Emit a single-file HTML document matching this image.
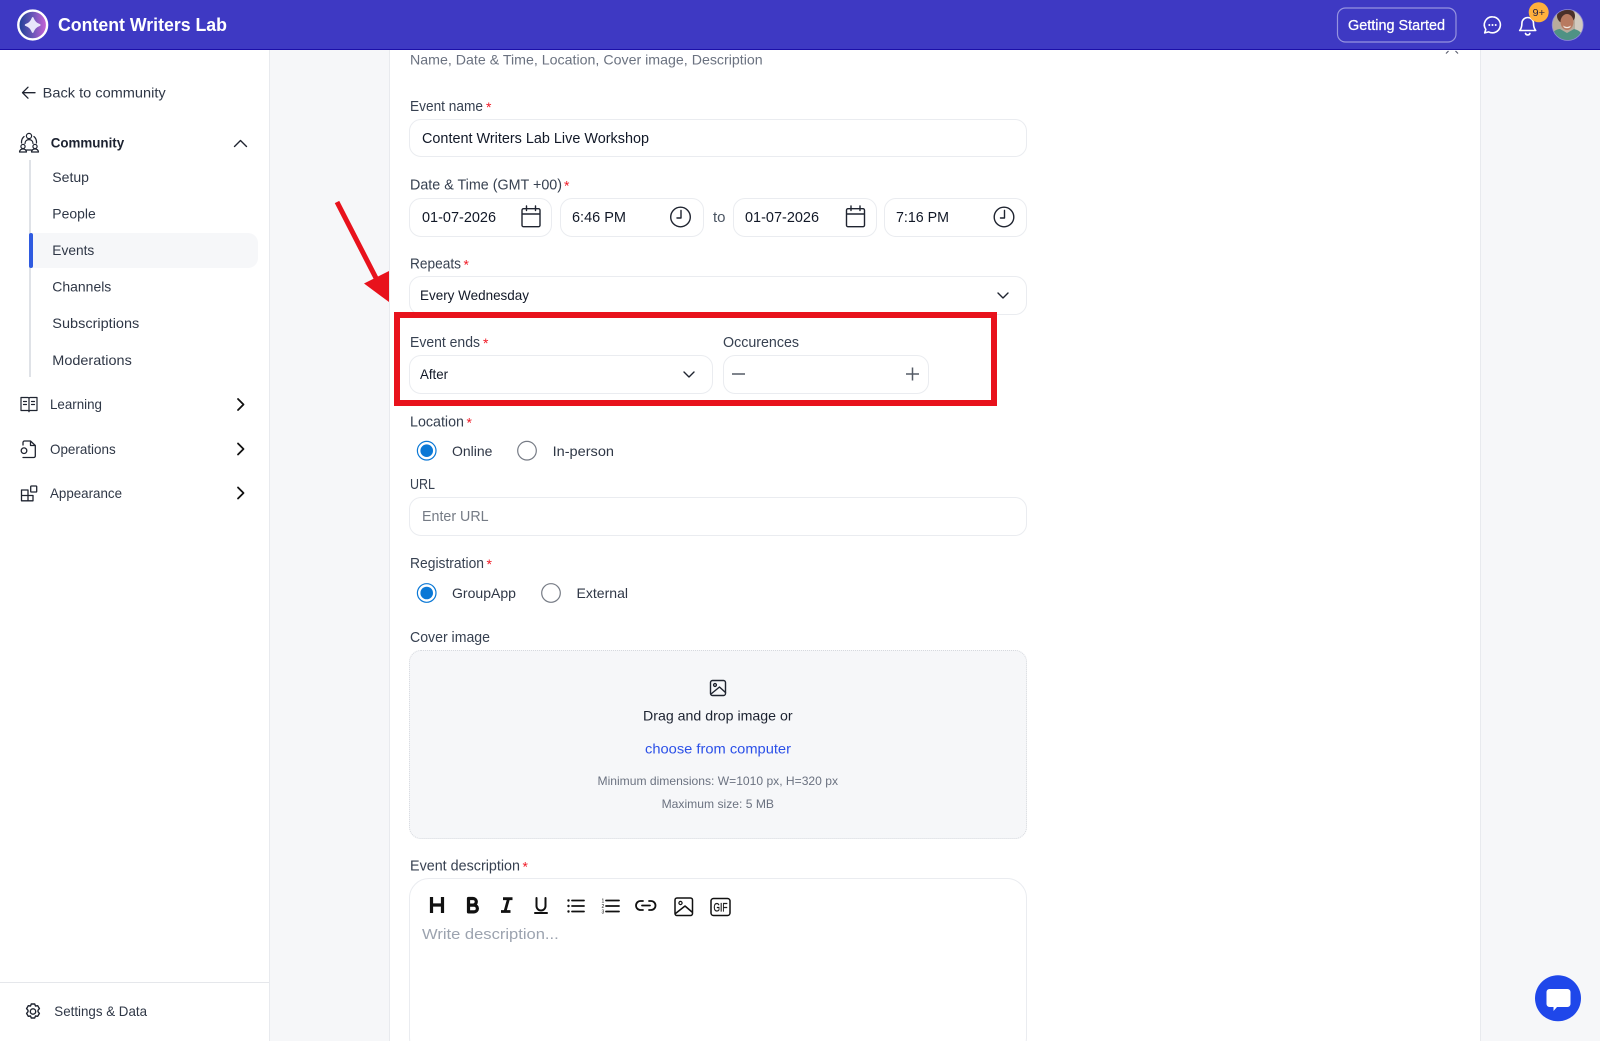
<!DOCTYPE html>
<html lang="en">
<head>
<meta charset="utf-8">
<title>Content Writers Lab</title>
<style>
html,body{margin:0;padding:0;width:1600px;height:1041px;overflow:hidden;background:#fff}
body{position:relative;font-family:"Liberation Sans",sans-serif}
.b{position:absolute;box-sizing:border-box}
.in{border:1px solid #eaecf0;border-radius:12px;background:#fff}
svg.o{position:absolute;left:0;top:0}
text{font-family:"Liberation Sans",sans-serif;font-size:14.5px;fill:#374151}
.v{fill:#111827}
.r{fill:#f01824;font-size:14px}
.s{fill:#2f3746;font-size:14px}
.i{fill:none;stroke:#1f2430;stroke-width:1.4;stroke-linecap:round;stroke-linejoin:round}
.c{fill:none;stroke:#111;stroke-width:1.8;stroke-linecap:round;stroke-linejoin:round}
.t{fill:none;stroke:#111;stroke-width:2;stroke-linecap:round;stroke-linejoin:round}
</style>
</head>
<body>
<div class="b" style="left:0;top:50px;width:270px;height:991px;background:#fff;border-right:1px solid #e8eaee"></div>
<div class="b" style="left:270px;top:50px;width:1330px;height:991px;background:#f6f7f9"></div>
<div class="b" style="left:389px;top:50px;width:1092px;height:991px;background:#fff;border-left:1px solid #e8eaee;border-right:1px solid #e8eaee"></div>
<div class="b" style="left:0;top:982px;width:269px;height:1px;background:#e5e7eb"></div>
<div class="b" style="left:29px;top:160px;width:2px;height:217px;background:#dfe2e7"></div>
<div class="b" style="left:30px;top:233px;width:228px;height:35px;background:#f6f7f9;border-radius:0 10px 10px 0"></div>
<div class="b" style="left:28.5px;top:233px;width:4.5px;height:35px;background:#2f5be0;border-radius:2px"></div>

<div class="b in" style="left:409px;top:119px;width:618px;height:38px"></div>
<div class="b in" style="left:409px;top:198px;width:143px;height:38.500px"></div>
<div class="b in" style="left:560px;top:198px;width:144px;height:38.500px"></div>
<div class="b in" style="left:733px;top:198px;width:144px;height:38.500px"></div>
<div class="b in" style="left:884px;top:198px;width:143px;height:38.500px"></div>
<div class="b in" style="left:409px;top:276px;width:618px;height:38.500px"></div>
<div class="b in" style="left:409px;top:355px;width:304px;height:38.500px"></div>
<div class="b in" style="left:723px;top:355px;width:206px;height:38.500px"></div>
<div class="b in" style="left:409px;top:497px;width:618px;height:39px"></div>
<div class="b" style="left:409px;top:650px;width:618px;height:189px;background:#f6f7f9;border:1px dotted #d6d9de;border-radius:12px"></div>
<div class="b" style="left:409px;top:878px;width:618px;height:180px;background:#fff;border:1px solid #eaecf0;border-radius:20px"></div>

<div class="b" style="left:394px;top:312px;width:603px;height:94px;border:6px solid #e8121c"></div>

<div class="b" style="left:0;top:0;width:1600px;height:50px;background:#3e39c3;border-bottom:1px solid #1c0fa8"></div>

<svg class="o" width="1600" height="1041" viewBox="0 0 1600 1041" xmlns="http://www.w3.org/2000/svg">
<defs>
<linearGradient id="lg" x1="0" y1="0" x2="1" y2="0"><stop offset="0" stop-color="#1b3e95"/><stop offset=".5" stop-color="#6a55b8"/><stop offset="1" stop-color="#cc63d8"/></linearGradient>
<clipPath id="av"><circle cx="1567.7" cy="25" r="15.5"/></clipPath>
</defs>

<!-- header -->
<circle cx="32.7" cy="25" r="14.4" fill="url(#lg)" stroke="#fff" stroke-width="2.4"/>
<path d="M32.700 18Q34.500 23.200 39.700 25Q34.500 26.800 32.700 32Q30.900 26.800 25.700 25Q30.900 23.200 32.700 18Z" fill="#e8e6fa" stroke="#e8e6fa" stroke-width="1.800" stroke-linejoin="round"/>
<text x="58" y="31" textLength="169" lengthAdjust="spacingAndGlyphs" style="font-size:18px;font-weight:700;fill:#fff">Content Writers Lab</text>
<rect x="1337.5" y="8" width="118.5" height="34" rx="8" fill="none" stroke="#9693e0" stroke-width="1.2"/>
<text x="1348" y="30" textLength="97" lengthAdjust="spacingAndGlyphs" style="font-size:14.5px;fill:#fff;stroke:#fff;stroke-width:.25">Getting Started</text>
<path d="M1492.500 16.800a8 8 0 1 1-3.800 15.100l-4 1 1.100-3.500a8 8 0 0 1 6.700-12.600Z" fill="none" stroke="#fff" stroke-width="1.6" stroke-linejoin="round"/>
<circle cx="1489.3" cy="25" r="1" fill="#fff"/><circle cx="1492.5" cy="25" r="1" fill="#fff"/><circle cx="1495.7" cy="25" r="1" fill="#fff"/>
<path d="M1527.700 17.500a5.800 5.800 0 0 0-5.800 5.800c0 4.200-1.200 6-2.200 7.200h16c-1-1.200-2.200-3-2.200-7.200a5.800 5.800 0 0 0-5.800-5.800ZM1525.500 33.500a2.400 2.400 0 0 0 4.400 0" fill="none" stroke="#fff" stroke-width="1.6" stroke-linecap="round" stroke-linejoin="round"/>
<circle cx="1538.7" cy="12.3" r="10" fill="#ffb03c"/>
<text x="1532.5" y="16" textLength="12.5" lengthAdjust="spacingAndGlyphs" style="font-size:10.5px;fill:#2a2440">9+</text>
<g clip-path="url(#av)">
<rect x="1552" y="9" width="32" height="32" fill="#b8ab9c"/>
<rect x="1575" y="9" width="10" height="32" fill="#d2cabf"/>
<ellipse cx="1566" cy="16" rx="9" ry="8" fill="#4a3029"/>
<ellipse cx="1567" cy="22" rx="6.5" ry="8" fill="#b87a60"/>
<path d="M1550 41c1-10 7-12 10-12l7 4 7-4c4 1 9 3 10 12Z" fill="#4f9284"/>
<path d="M1563 25.500q4 3 8 0l-1 2q-3 1.500-6 0Z" fill="#f3e9e2"/>
</g>
<circle cx="1567.7" cy="25" r="15.5" fill="none" stroke="#8d89d8" stroke-width=".8"/>
<path d="M1446 53.500l2.500-2.500M1458 53.500l-2.500-2.500" stroke="#5c6070" stroke-width="1.2" fill="none"/>

<!-- sidebar -->
<path class="i" style="stroke-width:1.300" d="M35 92.700H22.500M28 87.200l-5.500 5.500 5.500 5.500"/>
<text class="s" x="42.700" y="97.700" textLength="123" lengthAdjust="spacingAndGlyphs">Back to community</text>

<g class="i" style="stroke-width:1.200">
<circle cx="29" cy="136" r="2.600"/><path d="M25 143.500c0-2.400 1.700-3.900 4-3.900s4 1.500 4 3.900"/>
<circle cx="23" cy="146.500" r="2.100"/><circle cx="35" cy="146.500" r="2.100"/>
<path d="M19.500 152c.3-2 1.700-3 3.500-3s3.200 1 3.500 3ZM31.500 152c.3-2 1.700-3 3.500-3s3.200 1 3.500 3Z"/>
<path d="M21.500 143c-.2-2.500.8-5 2.600-6.500M36.500 143c.2-2.500-.8-5-2.600-6.500M26.500 150h5"/>
</g>
<text x="50.700" y="147.300" textLength="73.500" lengthAdjust="spacingAndGlyphs" style="font-size:14px;font-weight:700;fill:#1c2230">Community</text>
<path class="i" d="M234.500 146.500l6-6 6 6"/>
<text class="s" x="52.300" y="182" textLength="36.700" lengthAdjust="spacingAndGlyphs">Setup</text>
<text class="s" x="52.300" y="218.500" textLength="43.400" lengthAdjust="spacingAndGlyphs">People</text>
<text class="s" x="52.300" y="255" textLength="42" lengthAdjust="spacingAndGlyphs">Events</text>
<text class="s" x="52.300" y="291.500" textLength="59" lengthAdjust="spacingAndGlyphs">Channels</text>
<text class="s" x="52.300" y="328" textLength="87" lengthAdjust="spacingAndGlyphs">Subscriptions</text>
<text class="s" x="52.300" y="365" textLength="79.500" lengthAdjust="spacingAndGlyphs">Moderations</text>

<path class="i" style="stroke-width:1.200" d="M21 397.500h6.800a1.200 1.200 0 0 1 1.200 1.200 1.200 1.200 0 0 1 1.200-1.200H37v13h-6.800a1.200 1.200 0 0 0-1.200 1.200 1.200 1.200 0 0 0-1.200-1.200H21ZM29 398.700v13M23.500 401.500h3M23.500 404.500h3M31.500 401.500h3M31.500 404.500h3"/>
<text class="s" x="50" y="409" textLength="52" lengthAdjust="spacingAndGlyphs">Learning</text>
<path class="c" d="M238 399l5.500 5.500-5.500 5.500"/>

<path class="i" style="stroke-width:1.300" d="M23 445v-2.500a1.500 1.500 0 0 1 1.500-1.500h6l4.800 4.500v10.500a1.500 1.500 0 0 1-1.500 1.500H23M30.500 441v4.500h4.800"/>
<circle class="i" style="stroke-width:1.300" cx="24" cy="450.700" r="2.800"/>
<text class="s" x="50" y="454" textLength="65.700" lengthAdjust="spacingAndGlyphs">Operations</text>
<path class="c" d="M238 443.500l5.500 5.500-5.500 5.500"/>

<path class="i" style="stroke-width:1.300" d="M21.500 490h6.500v10.800h-6.500ZM21.500 495.500h11.500v5.300h-5"/>
<rect class="i" style="stroke-width:1.300" x="30.700" y="486" width="6" height="6" rx=".8"/>
<text class="s" x="50" y="498" textLength="72" lengthAdjust="spacingAndGlyphs">Appearance</text>
<path class="c" d="M238 487.500l5.500 5.500-5.500 5.500"/>

<g class="i" style="stroke-width:1.400">
<circle cx="33" cy="1011.500" r="2.700"/>
<path d="M31.300 1004h3.400l.8 2 2.200-.3 1.700 2.900-1.400 1.700 0 1.400 1.400 1.700-1.700 2.900-2.200-.3-.8 2h-3.400l-.8-2-2.200.3-1.700-2.900 1.400-1.700 0-1.400-1.400-1.700 1.700-2.900 2.200.3Z"/>
</g>
<text class="s" x="54.300" y="1016" textLength="92.700" lengthAdjust="spacingAndGlyphs">Settings &amp; Data</text>

<!-- form labels & values -->
<text x="410" y="64.500" textLength="352.700" lengthAdjust="spacingAndGlyphs" style="fill:#6b7280;font-size:14px">Name, Date &amp; Time, Location, Cover image, Description</text>

<text x="410" y="111" textLength="73" lengthAdjust="spacingAndGlyphs">Event name</text><text class="r" x="486" y="112">*</text>
<text class="v" x="422" y="143" textLength="227" lengthAdjust="spacingAndGlyphs" style="font-size:15px">Content Writers Lab Live Workshop</text>

<text x="410" y="189.500" textLength="152" lengthAdjust="spacingAndGlyphs">Date &amp; Time (GMT +00)</text><text class="r" x="564" y="190.500">*</text>
<text class="v" x="422" y="222" textLength="74" lengthAdjust="spacingAndGlyphs" style="font-size:15px">01-07-2026</text>
<text class="v" x="572" y="222" textLength="54" lengthAdjust="spacingAndGlyphs" style="font-size:15px">6:46 PM</text>
<text x="713" y="222" textLength="12.500" lengthAdjust="spacingAndGlyphs" style="fill:#4b5563">to</text>
<text class="v" x="745" y="222" textLength="74" lengthAdjust="spacingAndGlyphs" style="font-size:15px">01-07-2026</text>
<text class="v" x="896" y="222" textLength="53" lengthAdjust="spacingAndGlyphs" style="font-size:15px">7:16 PM</text>

<g class="i" style="stroke-width:1.400">
<path d="M523.500 208.700h15a1.500 1.500 0 0 1 1.500 1.500v15a1.500 1.500 0 0 1-1.500 1.500h-15a1.500 1.500 0 0 1-1.500-1.500v-15a1.500 1.500 0 0 1 1.500-1.500ZM522 214h18M526.500 206v4.500M535.500 206v4.500"/>
<path d="M848 208.700h15a1.500 1.500 0 0 1 1.500 1.500v15a1.500 1.500 0 0 1-1.500 1.500h-15a1.500 1.500 0 0 1-1.500-1.500v-15a1.500 1.500 0 0 1 1.500-1.500ZM846.500 214h18M851 206v4.500M860 206v4.500"/>
<circle cx="680.500" cy="217" r="9.800"/><path d="M681 210.500V218h-4"/>
<circle cx="1004" cy="217" r="9.800"/><path d="M1004.500 210.500V218h-4"/>
</g>

<text x="410" y="268.500" textLength="51" lengthAdjust="spacingAndGlyphs">Repeats</text><text class="r" x="463.500" y="269.500">*</text>
<text class="v" x="420" y="300" textLength="109" lengthAdjust="spacingAndGlyphs" style="font-size:14px">Every Wednesday</text>
<path class="i" d="M998 293l5 5 5-5"/>

<text x="410" y="347" textLength="70" lengthAdjust="spacingAndGlyphs">Event ends</text><text class="r" x="483" y="348">*</text>
<text x="723" y="347" textLength="76" lengthAdjust="spacingAndGlyphs">Occurences</text>
<text class="v" x="420" y="379" textLength="28" lengthAdjust="spacingAndGlyphs" style="font-size:14px">After</text>
<path class="i" d="M684 372l5 5 5-5"/>
<path d="M732 374h13M906 374h13M912.500 367.500v13" stroke="#555b66" stroke-width="1.500" fill="none"/>

<text x="410" y="426.500" textLength="54" lengthAdjust="spacingAndGlyphs">Location</text><text class="r" x="466.500" y="427.500">*</text>
<circle cx="426.700" cy="450.700" r="9.300" fill="#fff" stroke="#0a78d6" stroke-width="1.200"/><circle cx="426.700" cy="450.700" r="6.300" fill="#0a78d6"/>
<text class="v" x="452" y="456" textLength="40.400" lengthAdjust="spacingAndGlyphs" style="font-size:14px;fill:#2f3746">Online</text>
<circle cx="527" cy="450.700" r="9.300" fill="#fff" stroke="#767b85" stroke-width="1.200"/>
<text x="552.600" y="456" textLength="61.400" lengthAdjust="spacingAndGlyphs" style="font-size:14px;fill:#2f3746">In-person</text>

<text x="410" y="489" textLength="25" lengthAdjust="spacingAndGlyphs" style="font-size:15px">URL</text>
<text x="422" y="521" textLength="66.600" lengthAdjust="spacingAndGlyphs" style="fill:#757b85;font-size:15px">Enter URL</text>

<text x="410" y="568" textLength="74" lengthAdjust="spacingAndGlyphs">Registration</text><text class="r" x="486.500" y="569">*</text>
<circle cx="426.700" cy="593" r="9.300" fill="#fff" stroke="#0a78d6" stroke-width="1.200"/><circle cx="426.700" cy="593" r="6.300" fill="#0a78d6"/>
<text x="452" y="598" textLength="64" lengthAdjust="spacingAndGlyphs" style="font-size:14px;fill:#2f3746">GroupApp</text>
<circle cx="551" cy="593" r="9.300" fill="#fff" stroke="#767b85" stroke-width="1.200"/>
<text x="576.500" y="598" textLength="51.500" lengthAdjust="spacingAndGlyphs" style="font-size:14px;fill:#2f3746">External</text>

<text x="410" y="642" textLength="80" lengthAdjust="spacingAndGlyphs">Cover image</text>

<g class="i" style="stroke-width:1.400">
<rect x="710.500" y="680.500" width="15" height="15" rx="2"/>
<circle cx="715" cy="685" r="1.400"/>
<path d="M711 694l8.500-7 6 5.500"/>
</g>
<text class="v" x="643" y="720.500" textLength="149.600" lengthAdjust="spacingAndGlyphs" style="font-size:14px;fill:#1c2230">Drag and drop image or</text>
<text x="645" y="753.500" textLength="146" lengthAdjust="spacingAndGlyphs" style="font-size:14px;fill:#2b50e8">choose from computer</text>
<text x="597.500" y="785" textLength="240.500" lengthAdjust="spacingAndGlyphs" style="font-size:12px;fill:#6b7280">Minimum dimensions: W=1010 px, H=320 px</text>
<text x="661.600" y="808" textLength="112.400" lengthAdjust="spacingAndGlyphs" style="font-size:12px;fill:#6b7280">Maximum size: 5 MB</text>

<text x="410" y="870.500" textLength="110" lengthAdjust="spacingAndGlyphs">Event description</text><text class="r" x="522.500" y="871.500">*</text>

<!-- toolbar -->
<path d="M431.500 897v16M442.500 897v16M431.500 905h11" fill="none" stroke="#111" stroke-width="3.200"/>
<path d="M468.500 898.500h4.500a3.300 3.300 0 0 1 0 6.600h-4.500ZM468.500 905.100h5.500a3.400 3.400 0 0 1 0 6.800h-5.500Z" fill="none" stroke="#111" stroke-width="3.200" stroke-linejoin="round"/>
<path d="M503 898.700h9.500M501 911.500h9.500M508.500 898.700l-3.500 12.800" fill="none" stroke="#111" stroke-width="2.800"/>
<path class="t" d="M536.500 898v8a4.500 4.500 0 0 0 9 0v-8M535 913h12"/>
<path class="t" d="M572 900.500h12M572 906h12M572 911.500h12" style="stroke-width:1.800"/>
<circle cx="568.500" cy="900.500" r="1.200" fill="#111"/><circle cx="568.500" cy="906" r="1.200" fill="#111"/><circle cx="568.500" cy="911.500" r="1.200" fill="#111"/>
<path class="t" d="M606 900.500h13M606 906h13M606 911.500h13" style="stroke-width:1.800"/>
<text x="601.500" y="902.500" style="font-size:5px;fill:#111">1</text><text x="601.500" y="908" style="font-size:5px;fill:#111">2</text><text x="601.500" y="913.500" style="font-size:5px;fill:#111">3</text>
<path class="t" style="stroke-width:1.800" d="M643 901h-2.500a4.500 4.500 0 0 0 0 9h2.500M649 901h2a4.500 4.500 0 0 1 0 9h-2M642 905.500h8"/>
<rect class="t" style="stroke-width:1.500" x="675" y="898" width="17.500" height="17.500" rx="2"/>
<circle class="t" style="stroke-width:1.200" cx="680.500" cy="903" r="1.600"/>
<path class="t" style="stroke-width:1.500" d="M675.500 913.500l9.500-7.500 7 6"/>
<rect class="t" style="stroke-width:1.500" x="711" y="898.500" width="19" height="17" rx="2.500"/>
<text x="713.500" y="911.500" textLength="14" lengthAdjust="spacingAndGlyphs" style="font-size:12px;fill:#111;stroke:#111;stroke-width:.3">GIF</text>

<text x="422" y="939" textLength="136.700" lengthAdjust="spacingAndGlyphs" style="font-size:15px;fill:#9ca3af">Write description...</text>

<!-- arrow -->
<path d="M337 202L377 280" stroke="#e8121c" stroke-width="5" fill="none"/>
<path d="M389 271L364 283.500L389 302Z" fill="#e8121c"/>

<!-- chat bubble -->
<circle cx="1558" cy="998.300" r="23" fill="#1f47ea"/>
<path d="M1549.500 989h18a3 3 0 0 1 3 3v12a3 3 0 0 1-3 3h-10.500l-3.500 4v-4h-4a3 3 0 0 1-3-3v-12a3 3 0 0 1 3-3Z" fill="#fff"/>
</svg>
</body>
</html>
